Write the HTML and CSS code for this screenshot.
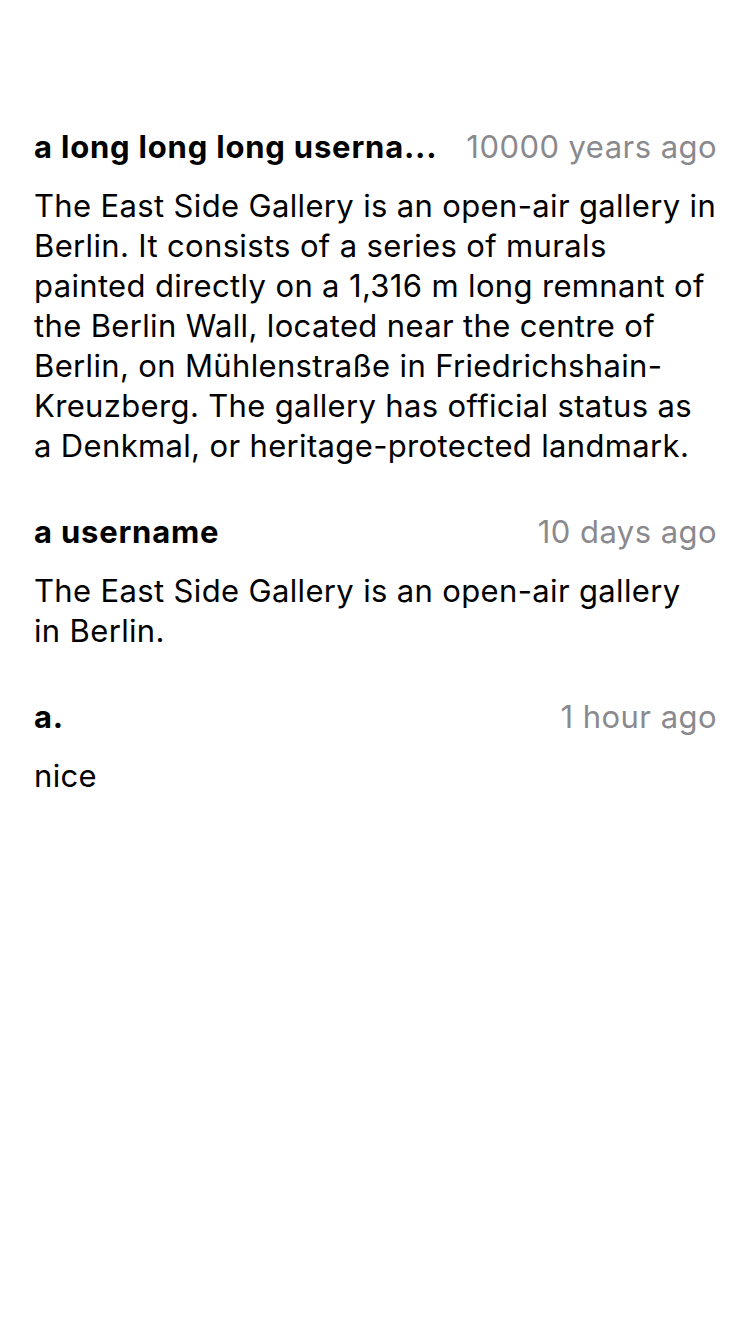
FILE: index.html
```html
<!DOCTYPE html>
<html>
<head>
<meta charset="utf-8">
<link rel="stylesheet" href="styles.css">
</head>
<body>
<div class="list">
  <div class="comment">
    <div class="head">
      <span class="user">a long long long userna...</span>
      <span class="time">10000 years ago</span>
    </div>
    <p class="text">The East Side Gallery is an open-air gallery in Berlin. It consists of a series of murals painted directly on a 1,316 m long remnant of the Berlin Wall, located near the centre of Berlin, on Mühlenstraße in Friedrichshain-Kreuzberg. The gallery has official status as a Denkmal, or heritage-protected landmark.</p>
  </div>
  <div class="comment">
    <div class="head">
      <span class="user">a username</span>
      <span class="time">10 days ago</span>
    </div>
    <p class="text text-narrow">The East Side Gallery is an open-air gallery in Berlin.</p>
  </div>
  <div class="comment">
    <div class="head">
      <span class="user">a.</span>
      <span class="time">1 hour ago</span>
    </div>
    <p class="text">nice</p>
  </div>
</div>
</body>
</html>
```
FILE: styles.css
```css
html, body {
  margin: 0;
  padding: 0;
  background: #ffffff;
}
body {
  font-family: Inter, "Liberation Sans", sans-serif;
  color: #000000;
}
.list {
  padding: 127px 33px 0 34px;
  display: flex;
  flex-direction: column;
  gap: 46px;
}
.comment {
  display: flex;
  flex-direction: column;
  gap: 19px;
}
.head {
  display: flex;
  align-items: center;
  justify-content: space-between;
  gap: 26px;
  font-size: 31px;
  line-height: 40px;
}
.user {
  font-weight: 700;
  letter-spacing: 0.8px;
  min-width: 0;
  white-space: nowrap;
  overflow: hidden;
  text-overflow: ellipsis;
}
.time {
  color: #8a8a8e;
  letter-spacing: 0.45px;
  white-space: nowrap;
  flex-shrink: 0;
}
.text {
  margin: 0;
  font-size: 31px;
  line-height: 40px;
  letter-spacing: 0.35px;
}
.text-narrow {
  max-width: 660px;
}
```
